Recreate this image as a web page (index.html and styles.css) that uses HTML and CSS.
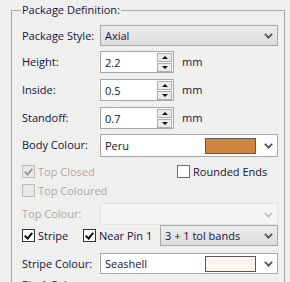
FILE: index.html
```html
<!DOCTYPE html>
<html>
<head>
<meta charset="utf-8">
<link rel="stylesheet" href="styles.css">
</head>
<body>
<fieldset class="group">
  <legend>Package Definition:</legend>

  <div class="row r1">
    <span class="label">Package Style:</span>
    <div class="combo btnstyle wide"><span class="val">Axial</span><span class="chev"></span></div>
  </div>

  <div class="row r2">
    <span class="label">Height:</span>
    <div class="spin"><span class="val">2.2</span><span class="btns"><span class="sb up"></span><span class="sb down"></span></span></div>
    <span class="unit">mm</span>
  </div>

  <div class="row r2">
    <span class="label">Inside:</span>
    <div class="spin"><span class="val">0.5</span><span class="btns"><span class="sb up"></span><span class="sb down"></span></span></div>
    <span class="unit">mm</span>
  </div>

  <div class="row r3">
    <span class="label">Standoff:</span>
    <div class="spin"><span class="val">0.7</span><span class="btns"><span class="sb up"></span><span class="sb down"></span></span></div>
    <span class="unit">mm</span>
  </div>

  <div class="row r4">
    <span class="label">Body Colour:</span>
    <div class="combo colour wide tall"><span class="val">Peru</span><span class="swatch peru"></span><span class="chev"></span></div>
  </div>

  <div class="row r5">
    <label class="check disabled col1"><span class="box checked"></span>Top Closed</label>
    <label class="check rounded"><span class="box"></span>Rounded Ends</label>
  </div>

  <div class="row r5">
    <label class="check disabled"><span class="box"></span>Top Coloured</label>
  </div>

  <div class="row r6">
    <span class="label disabled-text">Top Colour:</span>
    <div class="combo colour wide disabled-combo"><span class="val"></span><span class="chev light"></span></div>
  </div>

  <div class="row r7">
    <label class="check stripe"><span class="box checked"></span>Stripe</label>
    <label class="check"><span class="box checked"></span>Near Pin 1</label>
    <div class="combo btnstyle bands"><span class="val">3 + 1 tol bands</span><span class="chev"></span></div>
  </div>

  <div class="row r8">
    <span class="label">Stripe Colour:</span>
    <div class="combo colour wide short"><span class="val">Seashell</span><span class="swatch seashell"></span><span class="chev"></span></div>
  </div>

  <div class="row r9">
    <span class="label">Pin 1 Colour:</span>
  </div>
</fieldset>
</body>
</html>
```

FILE: styles.css
```css
html, body {
  margin: 0;
  padding: 0;
  background: #efefed;
  height: 282px;
  overflow: hidden;
}
body {
  font-family: "Open Sans", "DejaVu Sans", sans-serif;
  font-size: 11px;
  color: #14143a;
}
.group {
  margin: 3px 0 0 11px;
  width: 274px;
  padding: 0 6px 0 10px;
  border: 1px solid #a9a9a9;
  box-sizing: border-box;
  height: 290px;
}
.group legend {
  margin-left: -1px;
  padding: 0 1px;
  line-height: 14px;
  height: 14px;
}
.row {
  display: flex;
  align-items: flex-start;
}
.r1 { height: 26px; margin-top: 8px; }
.r2 { height: 28px; }
.r3 { height: 27px; }
.r4 { height: 31px; }
.r5 { height: 19px; }
.r6 { height: 24px; }
.r7 { height: 26px; }
.r8 { height: 25px; }
.r9 { height: 14px; }

.label {
  width: 78px;
  flex: none;
  line-height: 22px;
  white-space: nowrap;
}
.r9 .label { line-height: 14px; }
.disabled-text { color: #a9a9a9; }
.unit {
  margin-left: 8px;
  line-height: 22px;
}
.val {
  flex: 1;
  padding-left: 4px;
  white-space: nowrap;
}

.combo {
  display: flex;
  align-items: center;
  height: 21px;
  box-sizing: border-box;
  border: 1px solid #a8a8a8;
}
.wide { width: 178px; }
.tall { height: 23px; }
.short { height: 21px; }
.btnstyle {
  background: linear-gradient(#ececec, #dddddd);
}
.colour {
  background: #fff;
}
.disabled-combo {
  background: #f5f5f4;
  border-color: #e4e4e2;
  height: 22px;
}
.chev {
  width: 8px;
  height: 5px;
  margin: 0 5px 0 8px;
  flex: none;
  position: relative;
}
.chev::before, .chev::after {
  content: "";
  position: absolute;
  top: 0;
  width: 2px;
  height: 6px;
  background: #555;
}
.chev::before { left: 2px; transform: rotate(-45deg); }
.chev::after { left: 5px; transform: rotate(45deg); }
.chev.light::before, .chev.light::after { background: #c4c4c4; }

.swatch {
  width: 51px;
  height: 16px;
  box-sizing: border-box;
  border: 1px solid #5a5a5a;
  flex: none;
}
.peru { background: #cd853f; }
.seashell { background: #fff5ee; }

.spin {
  display: flex;
  align-items: center;
  width: 74px;
  height: 22px;
  box-sizing: border-box;
  border: 1px solid #a8a8a8;
  background: #fff;
}
.btns {
  display: flex;
  flex-direction: column;
  gap: 1px;
  margin-right: 1px;
}
.sb {
  width: 15px;
  height: 9px;
  box-sizing: border-box;
  border: 1px solid #adadad;
  background: #ebebeb;
  position: relative;
}
.sb::after {
  content: "";
  position: absolute;
  left: 4px;
  top: 2px;
  border-left: 3px solid transparent;
  border-right: 3px solid transparent;
}
.sb.up::after { border-bottom: 3px solid #111; }
.sb.down::after { border-top: 3px solid #111; }

.check {
  display: flex;
  align-items: center;
  height: 13px;
  line-height: 13px;
  white-space: nowrap;
}
.check.disabled { color: #a9a9a9; }
.col1 { width: 155px; flex: none; }
.stripe { width: 61px; flex: none; }
.bands { width: 118px; margin-left: auto; margin-top: -2px; }
.r7 .check { margin-top: 2px; }
.box {
  width: 13px;
  height: 13px;
  box-sizing: border-box;
  border: 1px solid #333;
  background: #fff;
  margin-right: 3px;
  position: relative;
  flex: none;
}
.rounded .box { border-color: #707070; }
.disabled .box { border-color: #bcbcbc; background: #e8e8e6; }
.box.checked::after {
  content: "";
  position: absolute;
  left: 3px;
  top: 1px;
  width: 3px;
  height: 6px;
  border-right: 2px solid #111;
  border-bottom: 2px solid #111;
  transform: rotate(40deg);
}
.disabled .box.checked::after { border-color: #9a9a9a; }
```
